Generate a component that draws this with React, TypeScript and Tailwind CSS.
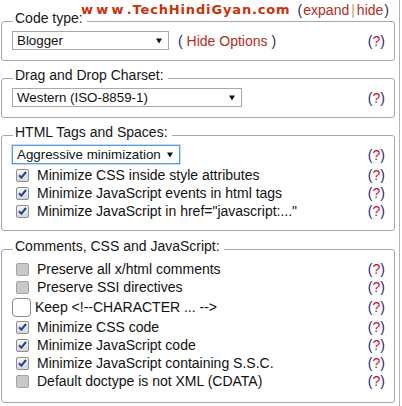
import React from 'react';

const Help = () => (
    <span className="ml-auto whitespace-nowrap">
        <span className="text-[#1c2a78]">(</span>
        <span className="text-[#c8102e]">?</span>
        <span className="text-[#1c2a78]">)</span>
    </span>
);

const Check = ({ checked }: { checked: boolean }) =>
    checked ? (
        <span className="ml-[4px] flex h-[13px] w-[13px] shrink-0 items-center justify-center rounded-[2px] border border-[#8e8e8e] bg-gradient-to-b from-[#f6f6f6] to-[#d6d6d6]">
            <svg width="9" height="8" viewBox="0 0 9 8">
                <path d="M1 4.2 L3.4 6.6 L8 1" fill="none" stroke="#1d3f9e" strokeWidth="2" />
            </svg>
        </span>
    ) : (
        <span className="ml-[4px] h-[13px] w-[13px] shrink-0 rounded-[2px] border border-[#a4a4a4] bg-[#c9c9c9]" />
    );

const Row = ({ label, checked }: { label: string; checked: boolean }) => (
    <div className="flex h-[18px] items-center">
        <Check checked={checked} />
        <span className="ml-[8px] whitespace-nowrap">{label}</span>
        <Help />
    </div>
);

const Select = ({ value, width, focus }: { value: string; width: string; focus?: boolean }) => (
    <div
        className={`flex h-[19px] shrink-0 items-center border pl-[4px] pr-[6px] text-[13.333px] ${width} ${
            focus ? 'border-[#5d9bd8] shadow-[0_0_0_1px_#c3dbf3]' : 'border-[#a9a9a9]'
        }`}
    >
        <span className="whitespace-nowrap">{value}</span>
        <svg className="ml-auto shrink-0" width="6" height="6" viewBox="0 0 6 6">
            <path d="M0 0.5 H6 L3 5.5 Z" fill="#111" />
        </svg>
    </div>
);

const Fieldset = ({
    legend,
    className,
    children,
}: {
    legend: string;
    className?: string;
    children: React.ReactNode;
}) => (
    <div className={`w-[394px] rounded-[3px] border border-[#a8a8a8] pr-[9px] ${className ?? ''}`}>
        <div className="-mt-[12px] flex h-[16px] leading-[16px]">
            <span className="ml-[11px] bg-white pl-[2px] pr-[4px] text-[#151515]">{legend}</span>
        </div>
        {children}
    </div>
);

export default function App() {
    return (
        <div className="h-[406px] w-[402px] overflow-hidden bg-white font-['Liberation_Sans',Arial,sans-serif] text-[14px] leading-[16px] text-[#111]">
            <div className="relative h-full w-[400px] border-r border-[#b4b4b4] pl-[1px] pt-[21px]">
                <div className="absolute left-[81px] top-[2px] z-10 whitespace-nowrap font-['DejaVu_Sans',Verdana,sans-serif] text-[13px] font-bold tracking-[0.85px] [word-spacing:-3px] text-[#c8320c]">
                    w w w .TechHindiGyan.com
                </div>
                <div className="absolute right-[10px] top-[2px] z-10 flex whitespace-nowrap">
                    <span className="text-[#1c2a78]">(</span>
                    <span className="ml-[1px] text-[#b0301c]">expand</span>
                    <span className="mx-[2px] text-[#c4a050]">|</span>
                    <span className="text-[#b0301c]">hide</span>
                    <span className="ml-[1px] text-[#1c2a78]">)</span>
                </div>

                <Fieldset legend="Code type:" className="pb-[10px]">
                    <div className="mt-[5px] flex items-center pl-[10px]">
                        <Select value="Blogger" width="w-[157px]" />
                        <span className="ml-[9px] whitespace-nowrap">
                            <span className="text-[#1c2a78]">( </span>
                            <span className="text-[#b0301c]">Hide Options</span>
                            <span className="text-[#1c2a78]"> )</span>
                        </span>
                        <Help />
                    </div>
                </Fieldset>

                <Fieldset legend="Drag and Drop Charset:" className="mt-[17px] pb-[10px]">
                    <div className="mt-[5px] flex items-center pl-[10px]">
                        <Select value="Western (ISO-8859-1)" width="w-[230px]" />
                        <Help />
                    </div>
                </Fieldset>

                <Fieldset legend="HTML Tags and Spaces:" className="mt-[17px] pb-[10px]">
                    <div className="mt-[5px] flex items-center pl-[10px]">
                        <Select value="Aggressive minimization" width="w-[168px]" focus />
                        <Help />
                    </div>
                    <div className="mt-[2px] pl-[10px]">
                        <Row label="Minimize CSS inside style attributes" checked />
                        <Row label="Minimize JavaScript events in html tags" checked />
                        <Row label={'Minimize JavaScript in href="javascript:..."'} checked />
                    </div>
                </Fieldset>

                <Fieldset legend="Comments, CSS and JavaScript:" className="mt-[18px] pb-[12px]">
                    <div className="mt-[6px] pl-[10px]">
                        <Row label="Preserve all x/html comments" checked={false} />
                        <Row label="Preserve SSI directives" checked={false} />
                        <div className="flex h-[22px] items-center">
                            <span className="h-[19px] w-[19px] shrink-0 rounded-[4px] border border-[#8c8c8c] bg-white" />
                            <span className="ml-[4px] whitespace-nowrap">{'Keep <!--CHARACTER ... -->'}</span>
                            <Help />
                        </div>
                        <Row label="Minimize CSS code" checked />
                        <Row label="Minimize JavaScript code" checked />
                        <Row label="Minimize JavaScript containing S.S.C." checked />
                        <Row label="Default doctype is not XML (CDATA)" checked={false} />
                    </div>
                </Fieldset>
            </div>
        </div>
    );
}
